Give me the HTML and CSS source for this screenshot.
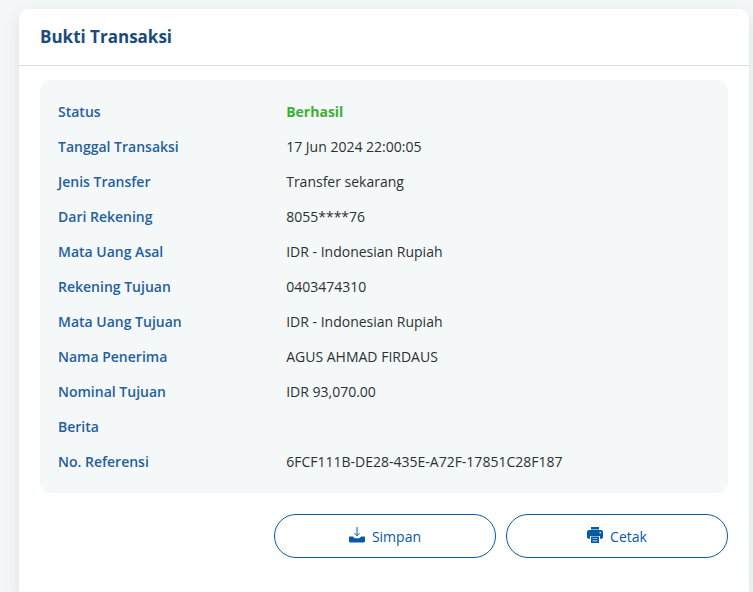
FILE: index.html
```html
<!DOCTYPE html>
<html lang="id">
<head>
  <meta charset="UTF-8" />
  <meta name="viewport" content="width=device-width, initial-scale=1" />
  <title>Bukti Transaksi</title>
  <link rel="stylesheet" href="styles.css">
</head>
<body>

  <main class="card">
    <header class="card-header">
      <h1>Bukti Transaksi</h1>
    </header>

    <div class="card-body">
      <dl class="details">
        <div class="line"><dt>Status</dt><dd class="success">Berhasil</dd></div>
        <div class="line"><dt>Tanggal Transaksi</dt><dd>17 Jun 2024 22:00:05</dd></div>
        <div class="line"><dt>Jenis Transfer</dt><dd>Transfer sekarang</dd></div>
        <div class="line"><dt>Dari Rekening</dt><dd>8055****76</dd></div>
        <div class="line"><dt>Mata Uang Asal</dt><dd>IDR - Indonesian Rupiah</dd></div>
        <div class="line"><dt>Rekening Tujuan</dt><dd>0403474310</dd></div>
        <div class="line"><dt>Mata Uang Tujuan</dt><dd>IDR - Indonesian Rupiah</dd></div>
        <div class="line"><dt>Nama Penerima</dt><dd>AGUS AHMAD FIRDAUS</dd></div>
        <div class="line"><dt>Nominal Tujuan</dt><dd>IDR 93,070.00</dd></div>
        <div class="line"><dt>Berita</dt><dd></dd></div>
        <div class="line"><dt>No. Referensi</dt><dd>6FCF111B-DE28-435E-A72F-17851C28F187</dd></div>
      </dl>

      <div class="actions">
        <button type="button">
          <svg class="icon" viewBox="0 0 16 16" aria-hidden="true">
            <path d="M8 0v8.500M5.500 6.200L8 8.800l2.500-2.600" fill="none" stroke="currentColor" stroke-width="1" />
            <path d="M1 9.500h2.600c.6 0 .8.300 1 .8.300.7.700 1 1.400 1h4c.7 0 1.100-.3 1.400-1 .2-.5.400-.8 1-.8H15c.6 0 1 .4 1 1V14c0 .9-.6 1.500-1.500 1.500h-13C.6 15.500 0 14.900 0 14v-3.500c0-.6.4-1 1-1z" fill="currentColor" />
          </svg>
          Simpan
        </button>
        <button type="button" onclick="window.print()">
          <svg class="icon" viewBox="0 0 16 16" aria-hidden="true">
            <path d="M4 0h8v2.500H4z" fill="currentColor" />
            <path d="M2 3h12a2 2 0 0 1 2 2v5c0 1-.6 1.700-1.600 1.700H13V9H3v2.700H1.600C.6 11.700 0 11 0 10V5a2 2 0 0 1 2-2zM12.500 5v1.200H14V5z" fill="currentColor" fill-rule="evenodd" />
            <path d="M4 9.600h8V16H4zM5.500 11.400v.7h5v-.7zM5.500 13.500v.7h5v-.7z" fill="currentColor" fill-rule="evenodd" />
          </svg>
          Cetak
        </button>
      </div>
    </div>
  </main>

</body>
</html>
```

FILE: styles.css
```css
/* Base styles */
* {
  box-sizing: border-box;
}

body {
  display: flex;
  min-height: 100vh;
  margin: 0;
  padding: 9px 4px 0 19px;
  background: #f4f7f8;
  color: #2b3035;
  font-family: "Open Sans", "Noto Sans", sans-serif;
  font-size: 14px;
}

.card {
  flex: 1;
  background: #fff;
  border-radius: 10px 10px 0 0;
  box-shadow: 0 6px 16px rgba(50, 70, 70, 0.12);
}

.card-header {
  padding: 16px 21px;
  border-bottom: 1px solid #d9dcde;
}

h1 {
  margin: 0;
  color: #1b4b7c;
  font-size: 17px;
  font-weight: 700;
  line-height: 24px;
}

.card-body {
  padding: 14px 21px 34px;
}

/* Transaction details */
.details {
  margin: 0;
  padding: 14px 18px;
  background: #f5f8f9;
  border-radius: 10px;
}

.line {
  display: grid;
  grid-template-columns: 35% 1fr;
  min-height: 35px;
  line-height: 35px;
}

dt {
  color: #1f609f;
  font-weight: 600;
}

dd {
  margin: 0;
}

.success {
  color: #3cb034;
  font-weight: 700;
}

/* Buttons */
.actions {
  display: flex;
  gap: 10px;
  width: 66%;
  margin: 21px 0 0 auto;
}

button {
  display: flex;
  flex: 1;
  align-items: center;
  justify-content: center;
  gap: 7px;
  height: 44px;
  padding: 0 16px;
  background: #fff;
  border: 1px solid #075a9f;
  border-radius: 22px;
  color: #075aa5;
  font-family: inherit;
  font-size: 14px;
  cursor: pointer;
}

button:hover {
  background: #f5f8f9;
}

.icon {
  width: 16px;
  height: 16px;
  margin-bottom: 3px;
}

@media print {
  .actions {
    display: none;
  }
}
```
